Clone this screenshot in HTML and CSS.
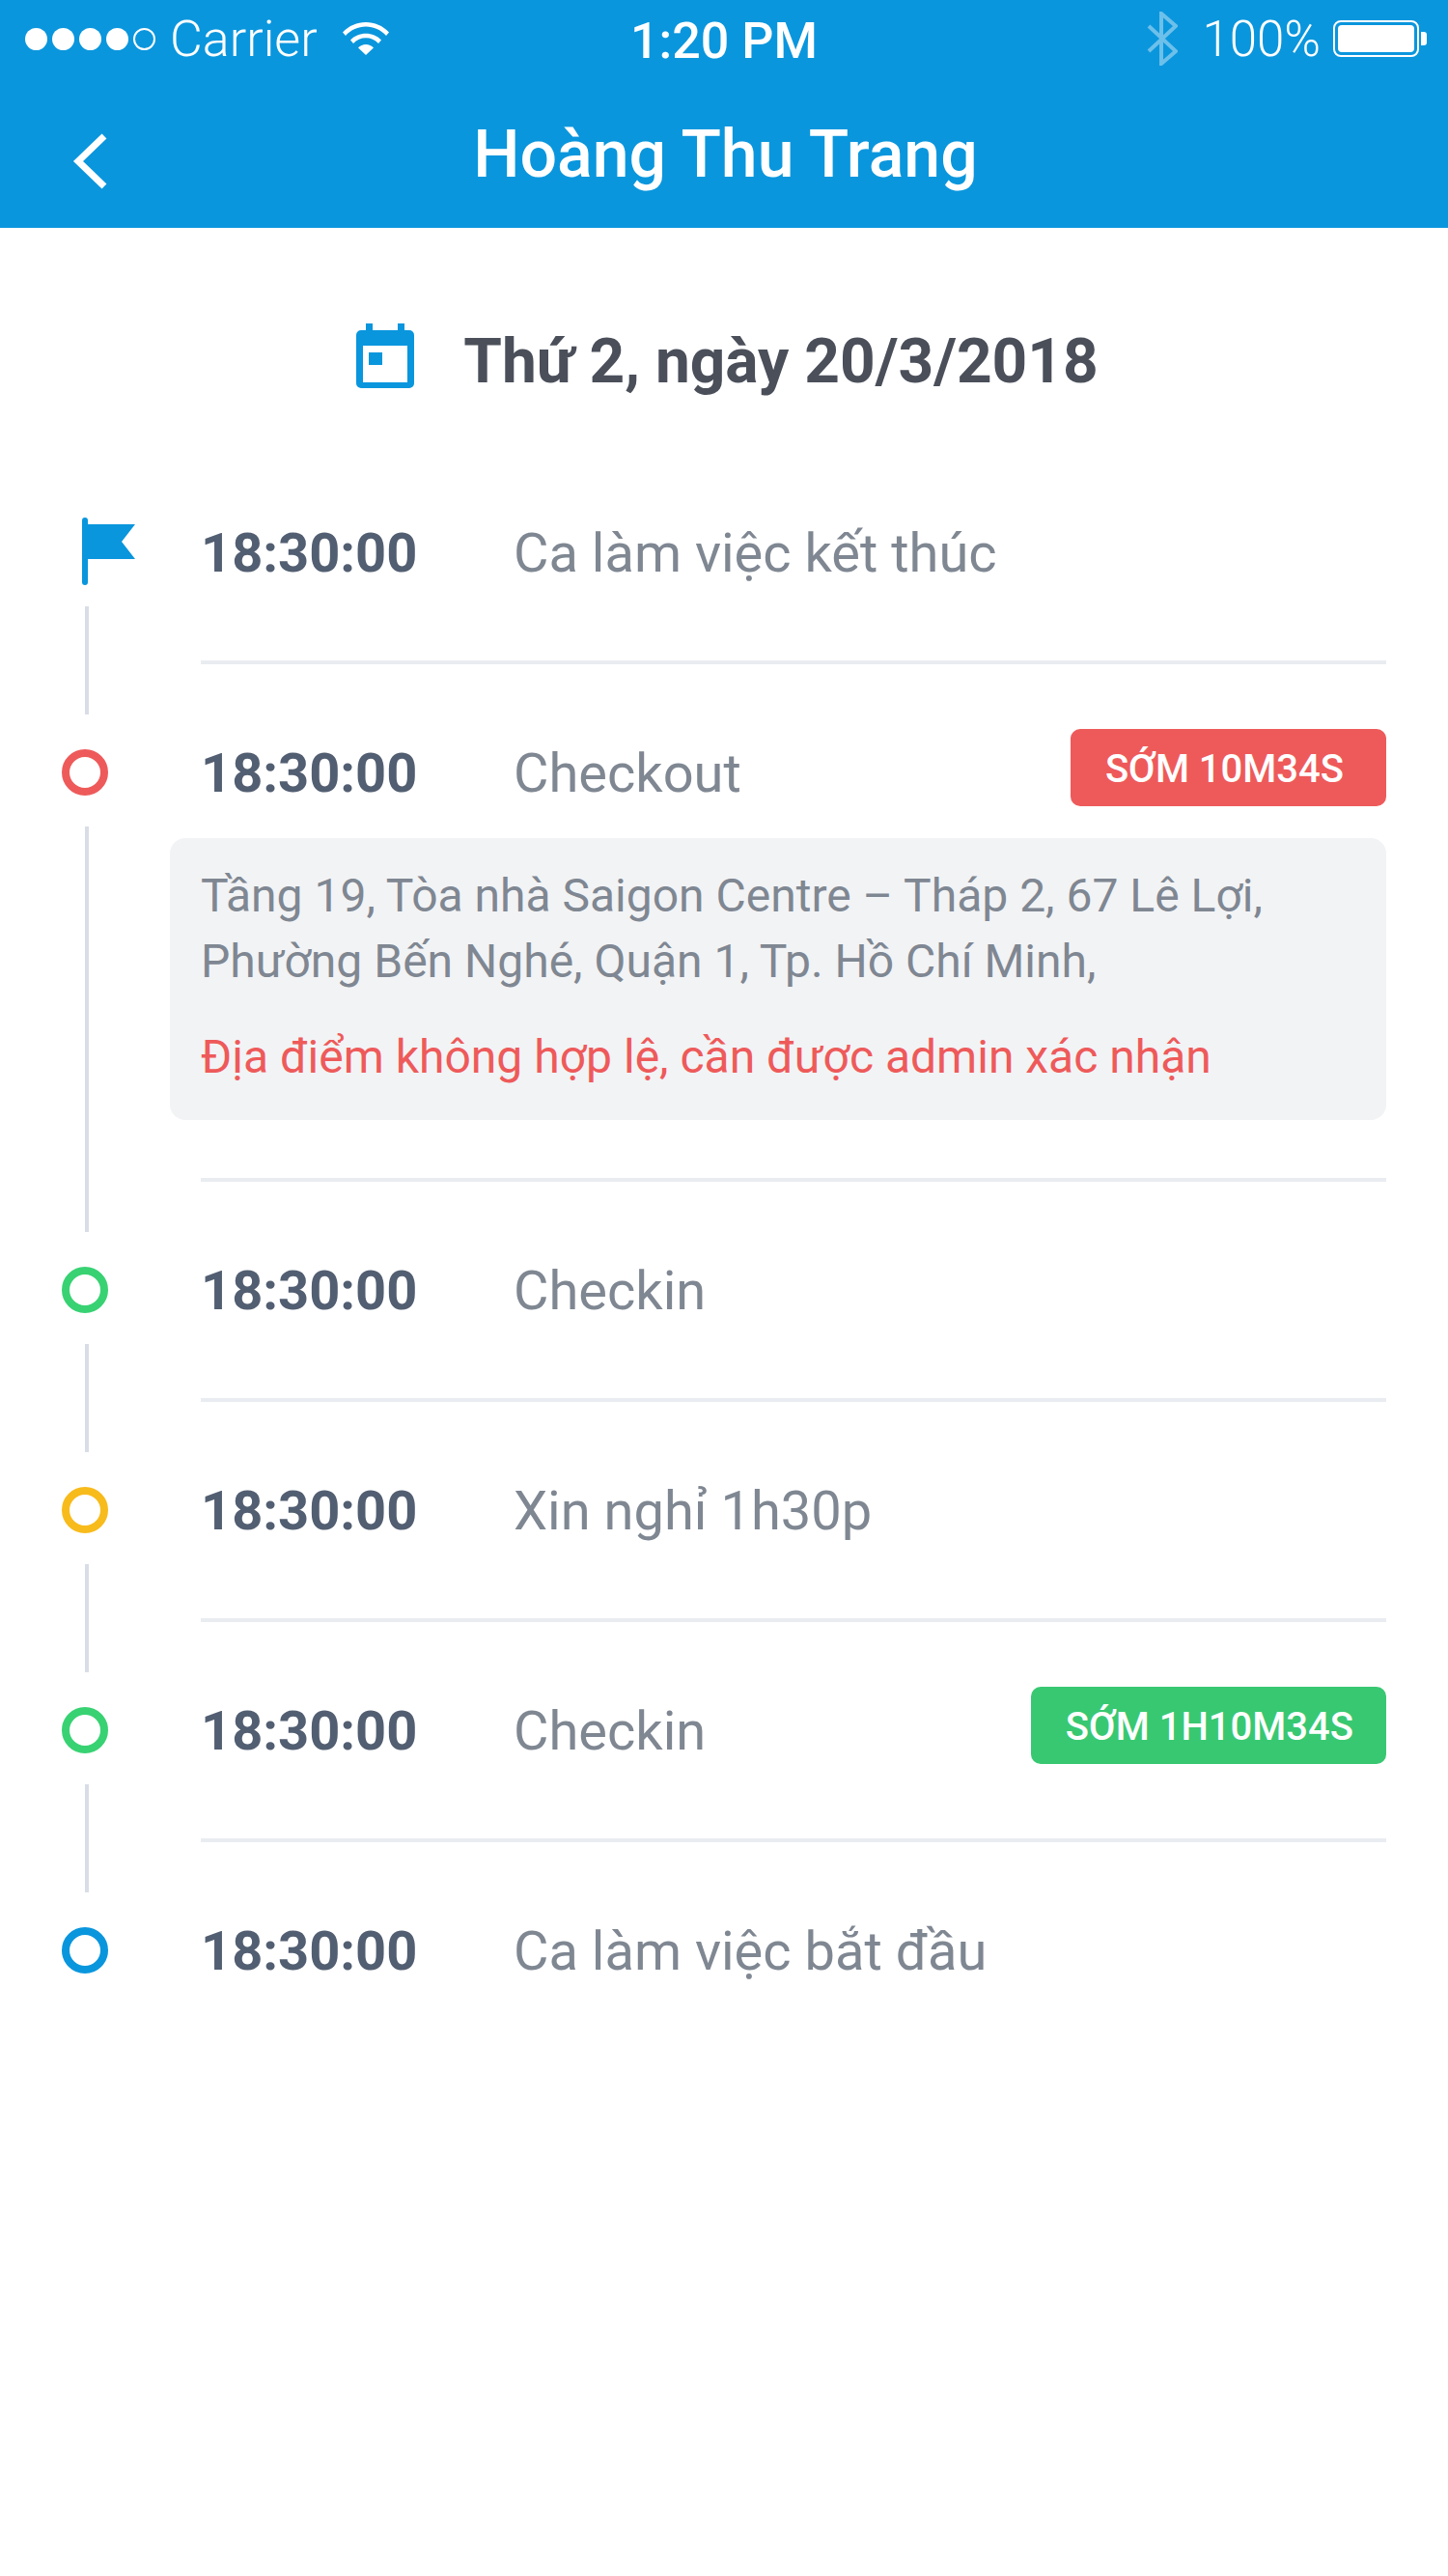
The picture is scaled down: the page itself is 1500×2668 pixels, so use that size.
FILE: index.html
```html
<!DOCTYPE html>
<html>

<head>
    <meta charset="UTF-8">
    <title>Hoàng Thu Trang</title>
    <link rel="stylesheet" href="styles.css">
</head>

<body>
    <header class="header">
        <div class="statusBar">
            <div class="statusLeft">
                <div class="signal">
                    <span class="signalDot"></span>
                    <span class="signalDot"></span>
                    <span class="signalDot"></span>
                    <span class="signalDot"></span>
                    <span class="signalDot signalEmpty"></span>
                </div>
                <span class="carrier">Carrier</span>
                <svg class="wifi" viewBox="0 0 48 35">
                    <path d="M0 11.500C6.500 4.500 15 1 24 1s17.500 3.500 24 10.500l-3 3.500C39.500 9 32 5.500 24 5.500S8.500 9 3 15z" fill="#fff"/>
                    <path d="M8 19.500C12 15.200 18 12.800 24 12.800s12 2.400 16 6.700l-3 3.500C33.500 19.300 29 17.300 24 17.300s-9.500 2-13 5.700z" fill="#fff"/>
                    <path d="M16 27.500c2-2.200 5-3.500 8-3.500s6 1.300 8 3.500L24 35z" fill="#fff"/>
                </svg>
            </div>
            <div class="clock">1:20 PM</div>
            <div class="statusRight">
                <svg class="bluetooth" viewBox="0 0 32 56">
                    <path d="M2 15l28 26L15 54V2l15 13L2 41" fill="none" stroke="#fff" stroke-width="4"/>
                </svg>
                <span class="percent">100%</span>
                <div class="battery">
                    <div class="batteryCase"><div class="batteryLevel"></div></div>
                    <div class="batteryTip"></div>
                </div>
            </div>
        </div>
        <div class="navBar">
            <svg class="back" viewBox="0 0 36 58">
                <path d="M33 3L6 29l27 26" fill="none" stroke="#fff" stroke-width="7"/>
            </svg>
            <h1 class="title">Hoàng Thu Trang</h1>
        </div>
    </header>

    <div class="dateRow">
        <svg class="calendar" viewBox="0 0 60 67">
            <path fill-rule="evenodd" fill="#0a96dd" d="M10 0h7v7h26V0h7v7h5a5 5 0 0 1 5 5v50a5 5 0 0 1-5 5H5a5 5 0 0 1-5-5V12a5 5 0 0 1 5-5h5zM7 23v38h46V23z"/>
            <rect x="13" y="30" width="14" height="13" fill="#0a96dd"/>
        </svg>
        <span class="dateText">Thứ 2, ngày 20/3/2018</span>
    </div>

    <div class="timeline">
        <div class="row">
            <div class="rail">
                <div class="marker">
                    <svg class="flag" viewBox="0 0 55 70">
                        <path d="M3 0a3 3 0 0 1 3 3v4h49L41 25l14 18H6v24a3 3 0 0 1-6 0V3a3 3 0 0 1 3-3z" fill="#0a96dd"/>
                    </svg>
                </div>
                <div class="connector"></div>
            </div>
            <div class="rowBody">
                <div class="rowHead">
                    <span class="time">18:30:00</span>
                    <span class="label">Ca làm việc kết thúc</span>
                </div>
                <div class="divider"></div>
            </div>
        </div>

        <div class="row">
            <div class="rail">
                <div class="marker"><span class="dot dotRed"></span></div>
                <div class="connector"></div>
            </div>
            <div class="rowBody">
                <div class="rowHead">
                    <span class="time">18:30:00</span>
                    <span class="label">Checkout</span>
                    <span class="badge badgeRed">SỚM 10M34S</span>
                </div>
                <div class="card">
                    <p class="address">Tầng 19, Tòa nhà Saigon Centre – Tháp 2, 67 Lê Lợi,<br>Phường Bến Nghé, Quận 1, Tp. Hồ Chí Minh,</p>
                    <p class="warning">Địa điểm không hợp lệ, cần được admin xác nhận</p>
                </div>
                <div class="divider"></div>
            </div>
        </div>

        <div class="row">
            <div class="rail">
                <div class="marker"><span class="dot dotGreen"></span></div>
                <div class="connector"></div>
            </div>
            <div class="rowBody">
                <div class="rowHead">
                    <span class="time">18:30:00</span>
                    <span class="label">Checkin</span>
                </div>
                <div class="divider"></div>
            </div>
        </div>

        <div class="row">
            <div class="rail">
                <div class="marker"><span class="dot dotYellow"></span></div>
                <div class="connector"></div>
            </div>
            <div class="rowBody">
                <div class="rowHead">
                    <span class="time">18:30:00</span>
                    <span class="label">Xin nghỉ 1h30p</span>
                </div>
                <div class="divider"></div>
            </div>
        </div>

        <div class="row">
            <div class="rail">
                <div class="marker"><span class="dot dotGreen"></span></div>
                <div class="connector"></div>
            </div>
            <div class="rowBody">
                <div class="rowHead">
                    <span class="time">18:30:00</span>
                    <span class="label">Checkin</span>
                    <span class="badge badgeGreen">SỚM 1H10M34S</span>
                </div>
                <div class="divider"></div>
            </div>
        </div>

        <div class="row">
            <div class="rail">
                <div class="marker"><span class="dot dotBlue"></span></div>
            </div>
            <div class="rowBody">
                <div class="rowHead">
                    <span class="time">18:30:00</span>
                    <span class="label">Ca làm việc bắt đầu</span>
                </div>
            </div>
        </div>
    </div>
</body>
</html>
```

FILE: styles.css
```css
* {
    box-sizing: border-box;
}
body {
    margin: 0;
    background: white;
    font-family: 'Roboto', 'Liberation Sans', sans-serif;
}
.header {
    height: 236px;
    background: #0a96dd;
    color: white;
}
.statusBar {
    height: 80px;
    display: grid;
    grid-template-columns: 1fr auto 1fr;
    align-items: center;
    padding: 0 22px 0 26px;
}
.statusLeft {
    display: flex;
    align-items: center;
}
.signal {
    display: flex;
    gap: 5px;
}
.signalDot {
    width: 23px;
    height: 23px;
    border-radius: 50%;
    background: white;
}
.signalEmpty {
    background: none;
    border: 2px solid white;
}
.carrier {
    margin-left: 15px;
    font-size: 52px;
    font-weight: 300;
}
.wifi {
    width: 48px;
    height: 35px;
    margin-left: 26px;
    margin-top: -2px;
}
.clock {
    margin: 4px 0 0 -4px;
    font-size: 52px;
    font-weight: 500;
}
.statusRight {
    display: flex;
    align-items: center;
    justify-content: flex-end;
}
.bluetooth {
    width: 32px;
    height: 56px;
    opacity: 0.4;
}
.percent {
    margin-left: 25px;
    font-size: 51px;
    font-weight: 300;
}
.battery {
    display: flex;
    align-items: center;
    margin-left: 13px;
}
.batteryCase {
    width: 89px;
    height: 38px;
    padding: 3px;
    border: 2px solid white;
    border-radius: 8px;
}
.batteryLevel {
    height: 100%;
    background: white;
    border-radius: 4px;
}
.batteryTip {
    width: 6px;
    height: 14px;
    margin-left: 2px;
    background: white;
    border-radius: 0 3px 3px 0;
}
.navBar {
    height: 156px;
    padding-top: 4px;
    display: flex;
    align-items: center;
    justify-content: center;
    position: relative;
}
.back {
    width: 36px;
    height: 58px;
    position: absolute;
    left: 75px;
    top: 58px;
}
.title {
    margin: 0;
    padding-left: 3px;
    font-size: 68px;
    font-weight: 500;
}
.dateRow {
    height: 280px;
    padding: 0 0 4px 7px;
    display: flex;
    align-items: center;
    justify-content: center;
    gap: 51px;
}
.calendar {
    width: 60px;
    height: 67px;
    margin-top: -12px;
}
.dateText {
    font-size: 64px;
    font-weight: 700;
    color: #4a4f5a;
}
.timeline {
    padding: 0 64px;
}
.row {
    display: flex;
}
.rail {
    width: 144px;
    flex: none;
    display: flex;
    flex-direction: column;
}
.marker {
    height: 112px;
    display: flex;
    align-items: center;
}
.flag {
    width: 55px;
    height: 70px;
    margin-left: 21px;
    margin-top: -2px;
}
.dot {
    width: 48px;
    height: 48px;
    border: 8px solid;
    border-radius: 50%;
}
.dotRed {
    border-color: #ee5a5a;
}
.dotGreen {
    border-color: #38d273;
}
.dotYellow {
    border-color: #f8bb1c;
}
.dotBlue {
    border-color: #0a96dd;
}
.connector {
    flex: 1;
    width: 4px;
    margin-left: 24px;
    margin-bottom: 4px;
    background: #d9dde6;
}
.rowBody {
    flex: 1;
}
.rowHead {
    height: 112px;
    padding-top: 2px;
    display: flex;
    align-items: center;
}
.time {
    width: 324px;
    flex: none;
    font-size: 56px;
    font-weight: 700;
    color: #525e71;
}
.label {
    flex: 1;
    font-size: 56px;
    color: #7f8792;
}
.badge {
    height: 80px;
    margin-bottom: 12px;
    padding: 2px 34px 0 36px;
    display: flex;
    align-items: center;
    border-radius: 10px;
    font-size: 40px;
    font-weight: 500;
    color: white;
}
.badgeRed {
    padding-right: 44px;
    background: #ee5a5a;
}
.badgeGreen {
    background: #38c872;
}
.card {
    height: 292px;
    margin: 12px 0 0 -32px;
    padding: 26px 32px 0;
    background: #f2f3f5;
    border-radius: 16px;
}
.address {
    margin: 0;
    font-size: 48px;
    line-height: 68px;
    color: #7f8792;
}
.warning {
    margin: 31px 0 0;
    font-size: 48px;
    line-height: 68px;
    color: #ee5a5a;
}
.divider {
    height: 4px;
    margin: 56px 0;
    background: #e9ecf1;
}
.card + .divider {
    margin-top: 60px;
}
```
